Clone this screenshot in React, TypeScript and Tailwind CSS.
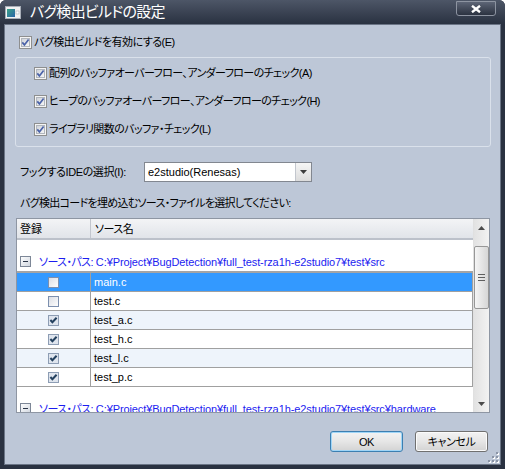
import React from "react";

const files = [
  { name: "main.c", checked: false },
  { name: "test.c", checked: false },
  { name: "test_a.c", checked: true },
  { name: "test_h.c", checked: true },
  { name: "test_l.c", checked: true },
  { name: "test_p.c", checked: true },
];

// Vista風のチェックボックス
function VistaCheck() {
  return (
    <svg width="13" height="13" viewBox="0 0 13 13" className="shrink-0">
      <defs>
        <linearGradient id="vc" x1="0" y1="0" x2="1" y2="1">
          <stop offset="0" stopColor="#cdd1d8" />
          <stop offset="1" stopColor="#f7f7f7" />
        </linearGradient>
      </defs>
      <rect x="0.5" y="0.5" width="12" height="12" fill="#f4f4f4" stroke="#8e8f8f" />
      <rect x="2.5" y="2.5" width="8" height="8" fill="url(#vc)" stroke="#b1b6bd" />
      <path d="M3.3 6.4 L5.4 8.9 L9.6 3.4" fill="none" stroke="#4a62a8" strokeWidth="1.7" />
    </svg>
  );
}

// 一覧の中の小さいチェックボックス
function RowCheck({ checked }: { checked: boolean }) {
  return (
    <svg width="11" height="11" viewBox="0 0 11 11">
      <defs>
        <linearGradient id="rc" x1="0" y1="0" x2="1" y2="1">
          <stop offset="0" stopColor="#d9dce3" />
          <stop offset="1" stopColor="#ffffff" />
        </linearGradient>
      </defs>
      <rect x="0.5" y="0.5" width="10" height="10" fill={checked ? "#dfe5ee" : "url(#rc)"} stroke={checked ? "#8d9db4" : "#7c8fae"} />
      {checked && <path d="M2.4 5 L4.4 7.3 L8.6 2.8" fill="none" stroke="#24415f" strokeWidth="2" />}
    </svg>
  );
}

function MinusBox() {
  return (
    <svg width="11" height="11" viewBox="0 0 11 11" className="shrink-0">
      <defs>
        <linearGradient id="mb" x1="0" y1="0" x2="1" y2="1">
          <stop offset="0" stopColor="#ffffff" />
          <stop offset="1" stopColor="#cfd5de" />
        </linearGradient>
      </defs>
      <rect x="0.5" y="0.5" width="10" height="10" fill="url(#mb)" stroke="#7d8797" />
      <path d="M3 5.5 H8" stroke="#2b3548" strokeWidth="1" />
    </svg>
  );
}

function GroupRow({ path }: { path: string }) {
  return (
    <div className="h-[19px] shrink-0 flex items-center pl-[3px] text-[#1c1cf0] whitespace-nowrap tracking-[-0.1px]">
      <MinusBox />
      <span className="ml-[8px]">
        <span className="tracking-[-0.6px]">ソース・パス:</span> {path}
      </span>
    </div>
  );
}

function Button({ label, primary }: { label: string; primary?: boolean }) {
  return (
    <button
      className={
        "w-[73px] h-[21px] rounded-[3px] border bg-gradient-to-b from-[#f3f3f3] via-[#e6e6e6] to-[#d3d3d3] text-black tracking-[-0.4px] " +
        (primary ? "border-[#3c7fb1] shadow-[inset_0_0_0_1px_#9fd5f7]" : "border-[#707070] shadow-[inset_0_0_0_1px_#fbfbfb]")
      }
    >
      {label}
    </button>
  );
}

export default function App() {
  return (
    <div className="w-[505px] h-[469px] bg-[#2a3241] flex flex-col overflow-hidden rounded-t-[6px] text-[11px] leading-[14px] text-black font-['Liberation_Sans','Noto_Sans_CJK_JP',sans-serif] [font-feature-settings:'palt']">
      {/* タイトルバー */}
      <div className="relative h-[24px] shrink-0 flex items-center pl-[5px] bg-gradient-to-b from-[#4d5667] to-[#2a3241]">
        <svg width="16" height="13" viewBox="0 0 16 13">
          <defs>
            <linearGradient id="ic" x1="0" y1="0" x2="1" y2="1">
              <stop offset="0" stopColor="#3aa386" />
              <stop offset="1" stopColor="#2a63a8" />
            </linearGradient>
          </defs>
          <rect x="0.5" y="0.5" width="15" height="12" fill="#f2f2f2" stroke="#a8aeb8" />
          <rect x="2" y="3" width="8" height="8" fill="url(#ic)" />
          <rect x="11" y="5" width="3" height="3" fill="#ffffff" stroke="#9aa2ad" strokeWidth="0.5" />
        </svg>
        <span className="ml-[9px] text-white text-[15px] leading-[18px] tracking-[-0.7px]">バグ検出ビルドの設定</span>
        <div className="absolute top-[1px] right-[9px] w-[40px] h-[15px] rounded-b-[3px] border border-[#8d94a1] bg-gradient-to-b from-[#5d6576] to-[#2c3341] flex items-center justify-center">
          <svg width="10" height="8" viewBox="0 0 10 8">
            <path d="M1 0.8 L9 7.2 M9 0.8 L1 7.2" stroke="#ffffff" strokeWidth="2.4" />
          </svg>
        </div>
      </div>

      {/* 本体 */}
      <div className="relative flex-1 mx-[4px] mb-[4px] border border-[#6b7586] bg-[#bdc7d7] flex flex-col">
        <div className="mt-[10px] ml-[14px] h-[14px] flex items-center gap-[2px]">
          <VistaCheck />
          <span className="tracking-[-0.5px]">バグ検出ビルドを有効にする(E)</span>
        </div>

        <div className="mt-[8px] ml-[10px] w-[476px] h-[90px] border border-[#dae1eb] rounded-[3px] pt-[1px] pl-[18px] flex flex-col">
          {[
            "配列のバッファオーバーフロー、アンダーフローのチェック(A)",
            "ヒープのバッファオーバーフロー、アンダーフローのチェック(H)",
            "ライブラリ関数のバッファ・チェック(L)",
          ].map((t) => (
            <div key={t} className="h-[28px] flex items-center gap-[2px]">
              <VistaCheck />
              <span className="tracking-[-0.6px]">{t}</span>
            </div>
          ))}
        </div>

        <div className="mt-[15px] pl-[15px] h-[20px] flex items-center">
          <span className="w-[124px] tracking-[-0.4px]">フックするIDEの選択(I):</span>
          <div className="w-[168px] h-[20px] bg-white border border-[#828790] flex items-stretch">
            <span className="flex-1 pl-[3px] flex items-center">e2studio(Renesas)</span>
            <span className="w-[16px] border-l border-[#c3c7ce] bg-gradient-to-b from-[#f6f6f6] to-[#dcdcdc] flex items-center justify-center">
              <svg width="7" height="4" viewBox="0 0 7 4">
                <path d="M0 0 H7 L3.5 4 Z" fill="#3c3c3c" />
              </svg>
            </span>
          </div>
        </div>

        <div className="mt-[14px] pl-[15px] h-[14px] tracking-[-0.7px]">バグ検出コードを埋め込むソース・ファイルを選択してください:</div>

        {/* ファイル一覧 */}
        <div className="mt-[8px] ml-[11px] w-[474px] h-[195px] border border-[#8e96a3] bg-white flex">
          <div className="flex-1 flex flex-col overflow-hidden">
            <div className="h-[21px] shrink-0 flex bg-gradient-to-b from-[#f3f4f6] to-[#e1e4e9] border-b-2 border-[#bcc1ca]">
              <div className="w-[74px] border-r border-[#c2c6ce] pl-[3px] flex items-center">登録</div>
              <div className="pl-[4px] flex items-center tracking-[-0.5px]">ソース名</div>
            </div>
            <div className="h-[12px] shrink-0" />
            <GroupRow path="C:¥Project¥BugDetection¥full_test-rza1h-e2studio7¥test¥src" />
            <div className="h-[2px] shrink-0 bg-[#a4a4a4]" />
            {files.map((f, i) => {
              const selected = i === 0;
              const bg = selected ? "bg-[#3399ff] text-white" : i % 2 === 0 ? "bg-[#eef4fb]" : "bg-white";
              return (
                <div key={f.name} className={"h-[19px] shrink-0 flex border-b border-r border-[#a0a0a0] " + bg}>
                  <div className="w-[74px] border-r border-[#a0a0a0] flex items-center justify-center">
                    <RowCheck checked={f.checked} />
                  </div>
                  <div className="pl-[3px] flex items-center">{f.name}</div>
                </div>
              );
            })}
            <div className="h-[12px] shrink-0" />
            <GroupRow path="C:¥Project¥BugDetection¥full_test-rza1h-e2studio7¥test¥src¥hardware" />
          </div>

          {/* スクロールバー */}
          <div className="w-[16px] shrink-0 flex flex-col bg-gradient-to-r from-[#e2e2e2] to-[#f2f2f2] border-l border-[#e0e0e0]">
            <div className="h-[17px] flex items-center justify-center">
              <svg width="7" height="4" viewBox="0 0 7 4">
                <path d="M0 4 H7 L3.5 0 Z" fill="#4a4a4a" />
              </svg>
            </div>
            <div className="h-[10px]" />
            <div className="h-[63px] rounded-[2px] border border-[#979797] bg-gradient-to-r from-[#f5f5f5] to-[#d6d6d6] flex flex-col items-center justify-center gap-[2px]">
              <div className="w-[7px] h-[1px] bg-[#5f5f5f]" />
              <div className="w-[7px] h-[1px] bg-[#5f5f5f]" />
              <div className="w-[7px] h-[1px] bg-[#5f5f5f]" />
            </div>
            <div className="flex-1" />
            <div className="h-[17px] flex items-center justify-center">
              <svg width="7" height="4" viewBox="0 0 7 4">
                <path d="M0 0 H7 L3.5 4 Z" fill="#4a4a4a" />
              </svg>
            </div>
          </div>
        </div>

        <div className="mt-[18px] pr-[12px] flex justify-end gap-[12px]">
          <Button label="OK" primary />
          <Button label="キャンセル" />
        </div>

        {/* サイズ変更グリップ */}
        <svg width="11" height="11" viewBox="0 0 11 11" className="absolute right-[1px] bottom-[1px]">
          {[
            [8, 0], [8, 4], [4, 4], [8, 8], [4, 8], [0, 8],
          ].map(([x, y]) => (
            <g key={`${x}-${y}`}>
              <rect x={x + 1} y={y + 1} width="2" height="2" fill="#ffffff" />
              <rect x={x} y={y} width="2" height="2" fill="#8a94a6" />
            </g>
          ))}
        </svg>
      </div>
    </div>
  );
}
